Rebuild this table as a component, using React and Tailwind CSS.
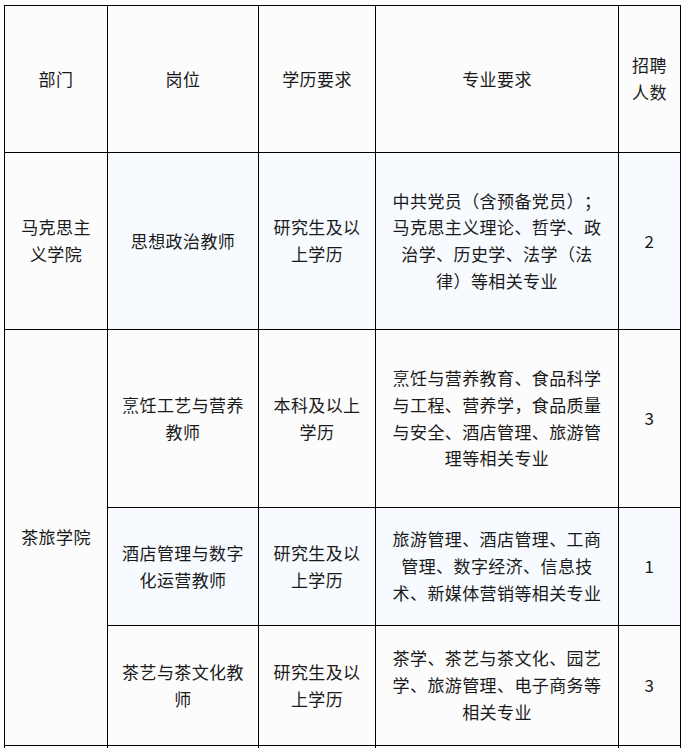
import React from "react";

const rows = [
  {
    dept: "马克思主义学院",
    span: 1,
    post: "思想政治教师",
    edu: "研究生及以上学历",
    major: "中共党员（含预备党员）；马克思主义理论、哲学、政治学、历史学、法学（法律）等相关专业",
    count: "2",
    h: "h-[177px]",
    blue: true,
  },
  {
    dept: "茶旅学院",
    span: 3,
    post: "烹饪工艺与营养教师",
    edu: "本科及以上学历",
    major: "烹饪与营养教育、食品科学与工程、营养学，食品质量与安全、酒店管理、旅游管理等相关专业",
    count: "3",
    h: "h-[178px]",
    blue: false,
  },
  {
    post: "酒店管理与数字化运营教师",
    edu: "研究生及以上学历",
    major: "旅游管理、酒店管理、工商管理、数字经济、信息技术、新媒体营销等相关专业",
    count: "1",
    h: "h-[118px]",
    blue: true,
  },
  {
    post: "茶艺与茶文化教师",
    edu: "研究生及以上学历",
    major: "茶学、茶艺与茶文化、园艺学、旅游管理、电子商务等相关专业",
    count: "3",
    h: "h-[120px]",
    blue: false,
  },
];

const cell =
  "border border-black px-[10px] text-center align-middle break-all";

export default function App() {
  return (
    <div
      className="w-[686px] h-[748px] overflow-hidden bg-white text-[#1a1a1a] text-[17px] leading-[26.7px] tracking-[0.4px] [text-spacing-trim:space-all]"
      style={{ fontFamily: '"Noto Sans CJK SC", "Noto Sans", sans-serif' }}
    >
      <table className="ml-[4px] mt-[5px] w-[677px] table-fixed border-collapse">
        <colgroup>
          <col className="w-[103px]" />
          <col className="w-[151px]" />
          <col className="w-[117px]" />
          <col className="w-[243px]" />
          <col className="w-[62px]" />
        </colgroup>
        <tbody>
          <tr className="h-[147px] bg-[#fcfcfc]">
            <td className={cell}>部门</td>
            <td className={cell}>岗位</td>
            <td className={cell}>学历要求</td>
            <td className={cell}>专业要求</td>
            <td className={cell}>招聘人数</td>
          </tr>
          {rows.map((r, i) => (
            <tr
              key={i}
              className={`${r.h} ${r.blue ? "bg-[#f7faff]" : "bg-[#fcfcfc]"}`}
            >
              {r.dept && (
                <td rowSpan={r.span} className={`${cell} bg-[#fcfcfc]`}>
                  {r.dept}
                </td>
              )}
              <td className={cell}>{r.post}</td>
              <td className={cell}>{r.edu}</td>
              <td className={cell}>{r.major}</td>
              <td className={cell}>{r.count}</td>
            </tr>
          ))}
          <tr className="h-[60px] bg-[#f7faff]">
            <td className={cell}></td>
            <td className={cell}></td>
            <td className={cell}></td>
            <td className={cell}></td>
            <td className={cell}></td>
          </tr>
        </tbody>
      </table>
    </div>
  );
}
